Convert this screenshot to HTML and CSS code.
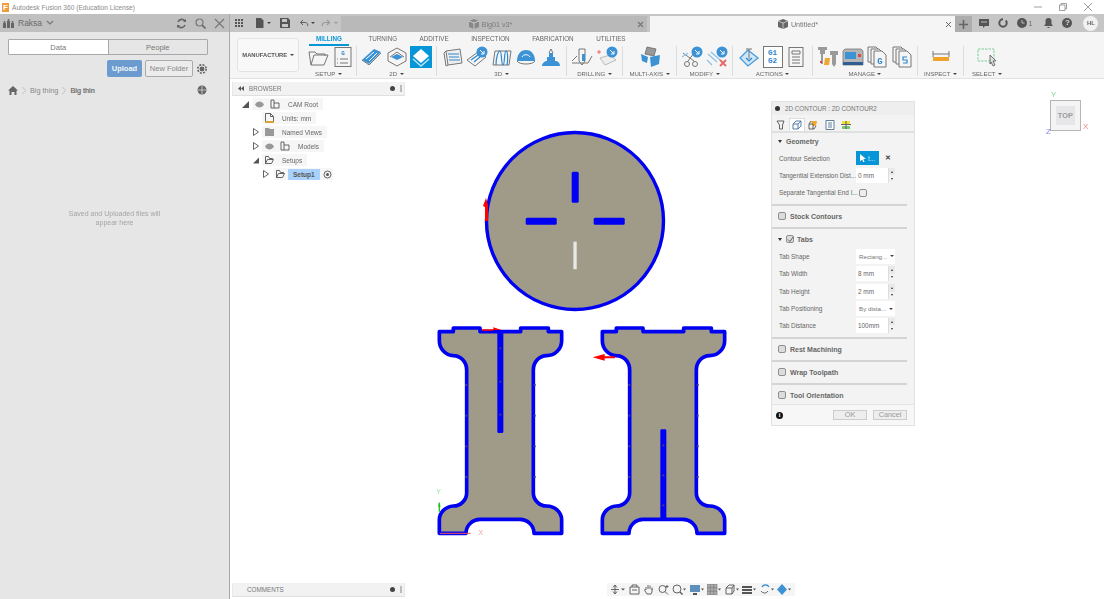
FILE: index.html
```html
<!DOCTYPE html>
<html lang="en">
<head>
<meta charset="utf-8">
<title>Autodesk Fusion 360</title>
<link rel="stylesheet" href="styles.css">
</head>
<body>
<div class="app">
  <header class="titlebar">
    <span class="logo">F</span>
    <span class="title">Autodesk Fusion 360 (Education License)</span>
    <span class="winctl">
      <svg width="10" height="10" viewBox="0 0 10 10"><path class="thin" d="M1 5h8"/></svg>
      <svg width="10" height="10" viewBox="0 0 10 10"><path class="thin" d="M1.500 3h5.500v5.500h-5.500zM3 3v-1.500h5.500v5.500h-1.500"/></svg>
      <svg width="10" height="10" viewBox="0 0 10 10"><path class="thin" d="M1 1l8 8M9 1l-8 8"/></svg>
    </span>
  </header>
  <div class="main">
    <aside class="left">
      <div class="lefthead">
        <svg width="11" height="9" viewBox="0 0 11 9"><path class="solid" d="M4 2h3v7h-3zM0 4h3v5h-3zM8 4h3v5h-3z"/><circle class="solid" cx="5.500" cy="1" r="1"/><circle class="solid" cx="1.500" cy="3" r="1"/><circle class="solid" cx="9.500" cy="3" r="1"/></svg>
        <span class="teamname">Raksa</span>
        <svg width="8" height="6" viewBox="0 0 8 6"><path class="line" d="M1 1l3 3 3-3"/></svg>
        <span class="spacer"></span>
        <svg width="11" height="11" viewBox="0 0 11 11"><path class="line2" d="M2 4a4 4 0 0 1 7-1M9 7a4 4 0 0 1-7 1"/><path class="solid" d="M10 1v3h-3zM1 10v-3h3z"/></svg>
        <svg class="gapl" width="11" height="11" viewBox="0 0 11 11"><circle class="line" cx="4.500" cy="4.500" r="3.500"/><path class="line2" d="M7 7l3.500 3.500"/></svg>
        <svg class="gapl" width="11" height="11" viewBox="0 0 11 11"><path class="line" d="M1 1l9 9M10 1l-9 9"/></svg>
      </div>
      <div class="segs"><span class="seg on">Data</span><span class="seg">People</span></div>
      <div class="actions">
        <span class="btn-up">Upload</span>
        <span class="btn-new">New Folder</span>
        <svg width="10" height="10" viewBox="0 0 10 10"><circle class="gear" cx="5" cy="5" r="3"/><circle class="dash" cx="5" cy="5" r="4.200"/></svg>
      </div>
      <div class="crumbs">
        <svg width="10" height="9" viewBox="0 0 10 9"><path class="solid" d="M5 0l5 4.500h-1.500v4.500h-2v-3h-3v3h-2v-4.500h-1.500z"/></svg>
        <svg width="6" height="9" viewBox="0 0 6 9"><path class="pale" d="M1 1l4 3.500-4 3.500"/></svg>
        <span>Big thing</span>
        <svg width="6" height="9" viewBox="0 0 6 9"><path class="pale" d="M1 1l4 3.500-4 3.500"/></svg>
        <span class="cur">Big thin</span>
        <span class="spacer"></span>
        <svg width="10" height="10" viewBox="0 0 10 10"><circle class="solid" cx="5" cy="5" r="4.500"/><path class="whiteline" d="M1 5h8M5 1v8"/></svg>
      </div>
      <p class="empty">Saved and Uploaded files will<br>appear here</p>
    </aside>
    <div class="work">
      <div class="tabbar">
        <svg width="10" height="10" viewBox="0 0 10 10"><path class="dark" d="M1 1h2v2h-2zM4 1h2v2h-2zM7 1h2v2h-2zM1 4h2v2h-2zM4 4h2v2h-2zM7 4h2v2h-2zM1 7h2v2h-2zM4 7h2v2h-2zM7 7h2v2h-2z"/></svg>
        <span class="qa qa-file">
          <svg width="9" height="10" viewBox="0 0 9 10"><path class="dark" d="M1 0h5l2.500 2.500v7.500h-7.500z"/></svg>
          <i class="caret"></i>
        </span>
        <svg class="qa-save" width="10" height="10" viewBox="0 0 10 10"><path class="dark" d="M0 0h8l2 2v8h-10zM2 1v3h5v-3zM2 6v3h6v-3z" fill-rule="evenodd"/></svg>
        <span class="qa qa-undo">
          <svg width="10" height="9" viewBox="0 0 10 9"><path class="darkline" d="M1.500 3.500h5a2.500 2.500 0 0 1 2 3.500M4 1l-2.500 2.500 2.500 2.500"/></svg>
          <i class="caret"></i>
        </span>
        <span class="qa qa-redo">
          <svg width="10" height="9" viewBox="0 0 10 9"><path class="paleline" d="M8.500 3.500h-5a2.500 2.500 0 0 0-2 3.500M6 1l2.500 2.500-2.500 2.500"/></svg>
          <i class="caret pale-c"></i>
        </span>
        <div class="doc inactive">
          <svg width="10" height="10" viewBox="0 0 10 10"><path class="tabcube" d="M5 0l5 2v6l-5 2-5-2v-6z"/><path class="whiteline" d="M5 4v6M0 2l5 2 5-2"/></svg>
          <span>Big01 v3*</span>
          <svg class="docx" width="7" height="7" viewBox="0 0 7 7"><path class="line" d="M1 1l5 5M6 1l-5 5"/></svg>
        </div>
        <div class="doc active">
          <svg width="10" height="10" viewBox="0 0 10 10"><path class="activecube" d="M5 0l5 2v6l-5 2-5-2v-6z"/><path class="whiteline" d="M5 4v6M0 2l5 2 5-2"/></svg>
          <span>Untitled*</span>
          <svg class="docx" width="7" height="7" viewBox="0 0 7 7"><path class="darkline" d="M1 1l5 5M6 1l-5 5"/></svg>
        </div>
        <div class="plus"><svg width="9" height="9" viewBox="0 0 9 9"><path class="line2" d="M4.500 0v9M0 4.500h9"/></svg></div>
        <div class="rightic">
          <svg width="10" height="9" viewBox="0 0 10 9"><path class="dark" d="M0 0h10v7h-4l-2 2v-2h-4z"/><path class="whiteline" d="M2 3h6"/></svg>
          <svg width="10" height="10" viewBox="0 0 10 10"><circle class="ring" cx="5" cy="5" r="3.700"/></svg>
          <span class="clock"><svg width="10" height="10" viewBox="0 0 10 10"><circle class="dark" cx="5" cy="5" r="5"/><path class="whiteline" d="M5 2v3h2.500"/></svg><b>1</b></span>
          <svg width="9" height="10" viewBox="0 0 9 10"><path class="dark" d="M4.500 0a3 3 0 0 1 3 3v3l1.500 2h-9l1.500-2v-3a3 3 0 0 1 3-3zM3.500 9h2v1h-2z"/></svg>
          <span class="help">?</span>
          <span class="avatar">HL</span>
        </div>
      </div>
      <div class="ribbon">
        <div class="mfg">MANUFACTURE<i class="caret"></i></div>
        <div class="ribcol">
          <nav class="modes">
            <span class="mode on">MILLING</span><span class="mode">TURNING</span><span class="mode">ADDITIVE</span><span class="mode">INSPECTION</span><span class="mode">FABRICATION</span><span class="mode">UTILITIES</span>
          </nav>
          <div class="tools">
            <section class="grp">
              <div class="ics">
                <svg class="ic" viewBox="0 0 22 22"><path class="o" d="M2 6h6l2 2h8v2M2 6l2 13h13l4-10h-14l-3 10"/></svg>
                <svg class="ic" viewBox="0 0 22 22"><rect class="o" x="3" y="1.500" width="16" height="19"/><text class="gl" x="11" y="9">G</text><path class="o" d="M8 13h8M8 17h8M5 13h1M5 17h1"/></svg>
              </div>
              <div class="lab lab-setup">SETUP<i class="caret"></i></div>
            </section>
            <section class="grp">
              <div class="ics">
                <svg class="ic" viewBox="0 0 22 22"><path class="b" d="M1 14l12-11 7 3-12 12z"/><path class="w" d="M5 13l8-7M8 15l8-8M3 16l6 4"/><path class="o" d="M1 14l7 5 12-12"/></svg>
                <svg class="ic" viewBox="0 0 22 22"><path class="o" d="M11 2l9 5v8l-9 5-9-5v-8z"/><path class="b" d="M11 8l6 3-6 3-6-3z"/><path class="o" d="M4 11l7-5 7 5"/></svg>
                <span class="ic sel"><svg viewBox="0 0 22 22"><path class="w-f" d="M11 3l8 7-8 7-8-7z"/><path class="wpale" d="M3 13l8 7 8-7"/></svg></span>
              </div>
              <div class="lab">2D<i class="caret"></i></div>
            </section>
            <section class="grp">
              <div class="ics">
                <svg class="ic" viewBox="0 0 22 22"><path class="o2" d="M4 5l14-2 2 14-14 2z"/><path class="o" d="M4 5l-2 2 2 13 2-1"/><path class="bl" d="M6 8h11M7 11h10M7 14h11"/></svg>
                <svg class="ic" viewBox="0 0 22 22"><path class="o" d="M1 14l11-8 8 5-11 9z"/><path class="bl" d="M5 14l7-5M8 16l6-5"/><circle class="b" cx="16" cy="6" r="5.500"/><path class="w" d="M14 4l4 4M18 5v3h-3"/></svg>
                <svg class="ic" viewBox="0 0 22 22"><path class="o" d="M4 5h16l-2 14h-16z"/><path class="bl" d="M5 19c0-7 2-14 4-14s1 14 3 14 1-14 3-14 2 9 1 14"/></svg>
                <svg class="ic" viewBox="0 0 22 22"><path class="b" d="M2 15c0-8 5-11 9-11s9 3 9 11z"/><path class="w" d="M7 11c1-3 7-3 8 0"/><path class="o" d="M2 15c2 4 16 4 18 0"/></svg>
                <svg class="ic" viewBox="0 0 22 22"><path class="b" d="M2 20c0-3 3-5 5-5v-4h2v-4h4v4h2v4c3 0 5 2 5 5z"/><path class="o" d="M9 7l2-4 2 4"/></svg>
              </div>
              <div class="lab">3D<i class="caret"></i></div>
            </section>
            <section class="grp">
              <div class="ics">
                <svg class="ic" viewBox="0 0 22 22"><path class="o" d="M8 3h6v12l-3 4-3-4zM1 15l5-5M21 10l-4 7h-16"/><path class="b" d="M11 8h3v7h-3z"/></svg>
                <svg class="ic" viewBox="0 0 22 22"><path class="opale" d="M4 12l10-3 6 5-11 5z"/><path class="r" d="M1 6h4M3 4v4"/><circle class="b" cx="16" cy="6" r="5.500"/><path class="w" d="M14 4l4 4M18 5v3h-3"/></svg>
              </div>
              <div class="lab">DRILLING<i class="caret"></i></div>
            </section>
            <section class="grp">
              <div class="ics">
                <svg class="ic" viewBox="0 0 22 22"><path class="o-f" d="M8 1l9 2-2 7-9-2z"/><path class="b" d="M2 8l7 3-1 6-5-2zM11 11l10-2-1 9-8 3z"/></svg>
              </div>
              <div class="lab">MULTI-AXIS<i class="caret"></i></div>
            </section>
            <section class="grp">
              <div class="ics">
                <svg class="ic" viewBox="0 0 22 22"><path class="o" d="M2 7l11 8M7 15l6-8"/><circle class="o" cx="6" cy="18" r="2.500"/><circle class="o" cx="14" cy="18" r="2.500"/><path class="blp" d="M1 11l6-4"/><circle class="b" cx="16" cy="6" r="5.500"/><path class="w" d="M14 4l4 4M18 5v3h-3"/></svg>
                <svg class="ic" viewBox="0 0 22 22"><path class="blp" d="M2 8l9 8M1 14l5 5M5 6l9 8"/><path class="rx" d="M14 14l6 6M20 14l-6 6"/><circle class="b" cx="16" cy="6" r="5.500"/><path class="w" d="M14 4l4 4M18 5v3h-3"/></svg>
              </div>
              <div class="lab">MODIFY<i class="caret"></i></div>
            </section>
            <section class="grp">
              <div class="ics">
                <svg class="ic" viewBox="0 0 22 22"><path class="blw" d="M10 4l-8 8 8 8 10-8z"/><path class="o2" d="M8 3h6M11 3v10"/><path class="bl" d="M8 12l3 3 3-3"/></svg>
                <span class="ic gbox"><b>G1</b><b>G2</b></span>
                <svg class="ic" viewBox="0 0 22 22"><rect class="o" x="4" y="1.500" width="14" height="19"/><path class="o" d="M7 5h8v3h-8zM7 11h8M7 14h8M7 17h8"/></svg>
              </div>
              <div class="lab">ACTIONS<i class="caret"></i></div>
            </section>
            <section class="grp">
              <div class="ics">
                <svg class="ic" viewBox="0 0 22 22"><path class="gr" d="M1 1h9v3h-2v4h-5v-4h-2zM13 5h8v4h-2v9l-2 3-2-3v-9h-2z"/><path class="o-thick" d="M5 8v10"/><path class="or" d="M8 12h5l-1 7h-5z"/><path class="rf" d="M3 15h2v2h-2z"/></svg>
                <svg class="ic" viewBox="0 0 22 22"><path class="gr2" d="M1 5l2-2h16l2 2v14h-20z"/><rect class="b" x="3" y="6" width="11" height="7"/><rect class="bd" x="1" y="16" width="20" height="3"/><path class="rf" d="M16 8h3v3h-3z"/></svg>
                <svg class="ic" viewBox="0 0 22 22"><path class="of" d="M2 1h8l3 3v12h-11z"/><path class="of" d="M5 3h8l3 3v12h-11z"/><path class="of" d="M8 5h8l4 4v12h-12z"/><text class="gl big" x="14" y="18">G</text></svg>
                <svg class="ic" viewBox="0 0 22 22"><path class="of" d="M2 1h8l3 3v12h-11z"/><path class="of" d="M5 3h8l3 3v12h-11z"/><path class="of" d="M8 5h8l4 4v12h-12z"/><path class="bl" d="M16 11h-4v3h4v3h-4"/></svg>
              </div>
              <div class="lab">MANAGE<i class="caret"></i></div>
            </section>
            <section class="grp">
              <div class="ics">
                <svg class="ic" viewBox="0 0 22 22"><path class="o" d="M3 5v6M19 5v6M3 8h16"/><rect class="orf" x="3" y="11" width="16" height="4"/></svg>
              </div>
              <div class="lab">INSPECT<i class="caret"></i></div>
            </section>
            <section class="grp nosep">
              <div class="ics">
                <svg class="ic" viewBox="0 0 22 22"><rect class="grn" x="2" y="3" width="16" height="12"/><path class="cur-i" d="M14 9l6 6h-3l2 4-2 1-2-4-1 2z"/></svg>
              </div>
              <div class="lab">SELECT<i class="caret"></i></div>
            </section>
          </div>
        </div>
      </div>
      <div class="canvas">
        <svg class="scene" viewBox="230 79 874 520">
          <defs>
            <path id="ishape" d="M28 35H70V24H150V35H272V24H355V35H395V62A45 45 0 0 1 350 107A40 43 0 0 0 310 150V518A40 40 0 0 0 350 558A45 42 0 0 1 395 600V640H312A42 42 0 0 0 270 598H150A42 42 0 0 0 108 640H28V600A45 42 0 0 1 70 558A40 40 0 0 0 110 518V150A40 43 0 0 0 70 107A45 45 0 0 1 28 62Z"/>
          </defs>
          <circle class="part" cx="575" cy="221" r="88.500"/>
          <rect class="cut" x="571.700" y="171.700" width="7" height="31" rx="1.500"/>
          <rect class="cut" x="525.700" y="217.700" width="31" height="7" rx="1.500"/>
          <rect class="cut" x="593.700" y="217.700" width="31" height="7" rx="1.500"/>
          <rect class="slit" x="573.400" y="241.700" width="3.300" height="27.500"/>
          <path class="arrow" d="M485 221V207L483 206L486 198L488 205V221Z"/>
          <g class="scale3">
            <use class="part2" href="#ishape"/>
            <rect class="cut" x="202" y="35" width="18" height="304" rx="4"/>
            <path class="arrow" d="M155 32V28H190V22L215 30H190V32Z"/>
            <g class="marks">
              <rect x="106" y="192" width="6" height="6"/><rect x="106" y="284" width="6" height="6"/><rect x="106" y="376" width="6" height="6"/><rect x="106" y="468" width="6" height="6"/>
              <rect x="311" y="192" width="6" height="6"/><rect x="311" y="284" width="6" height="6"/><rect x="311" y="376" width="6" height="6"/><rect x="311" y="468" width="6" height="6"/>
              <rect x="208" y="82" width="6" height="6"/><rect x="208" y="182" width="6" height="6"/><rect x="208" y="281" width="6" height="6"/>
            </g>
            <path class="axis-g" d="M28 575V548"/>
            <path class="axis-gf" d="M24 560L28 546L32 560Z"/>
            <path class="axis-r" d="M30 640H122"/>
            <text class="ax-y" x="26" y="522">Y</text>
            <text class="ax-x" x="152" y="646">X</text>
            <g transform="translate(489 0)">
              <use class="part2" href="#ishape"/>
              <rect class="cut" x="202" y="328" width="18" height="272" rx="4"/>
              <g class="marks">
                <rect x="106" y="192" width="6" height="6"/><rect x="106" y="284" width="6" height="6"/><rect x="106" y="376" width="6" height="6"/><rect x="106" y="468" width="6" height="6"/>
                <rect x="311" y="192" width="6" height="6"/><rect x="311" y="284" width="6" height="6"/><rect x="311" y="376" width="6" height="6"/><rect x="311" y="468" width="6" height="6"/>
                <rect x="208" y="373" width="6" height="6"/><rect x="208" y="463" width="6" height="6"/><rect x="208" y="553" width="6" height="6"/>
              </g>
              <path class="arrow" d="M66 109H35V102L-1 112L35 122V115H66Z"/>
            </g>
          </g>
        </svg>

        <div class="browser">
          <div class="phead"><svg width="6" height="5" viewBox="0 0 6 5"><path class="dark" d="M3 0v5l-3-2.500zM6 0v5l-3-2.500z"/></svg><span>BROWSER</span><span class="spacer"></span><span class="pdot"></span><span class="pbar"></span></div>
          <ul class="tree">
            <li class="row l0"><svg class="tri" width="9" height="9" viewBox="0 0 9 9"><path class="dark" d="M8 1v7h-7z"/></svg><span class="pill">
              <svg width="9" height="7" viewBox="0 0 9 7"><path class="eye" d="M0 3.500c2-4 7-4 9 0c-2 4-7 4-9 0z"/></svg>
              <svg width="10" height="10" viewBox="0 0 10 10"><path class="darkline" d="M1 1h3v3h5v5h-8zM4 4v5"/></svg><span class="tx">CAM Root</span></span></li>
            <li class="row l1b"><span class="pill">
              <svg width="9" height="10" viewBox="0 0 9 10"><path class="darkline" d="M.5.500h5l3 3v6h-8zM5.500.500v3h3"/><path class="unit" d="M0 8h9v2h-9z"/></svg><span class="tx">Units: mm</span></span></li>
            <li class="row l1"><svg class="tri" width="6" height="8" viewBox="0 0 6 8"><path class="darkline" d="M.5.500v7l5-3.500z"/></svg><span class="pill">
              <svg width="9" height="8" viewBox="0 0 9 8"><path class="folder" d="M0 0h4l1 1h4v7h-9z"/></svg><span class="tx">Named Views</span></span></li>
            <li class="row l1"><svg class="tri" width="6" height="8" viewBox="0 0 6 8"><path class="darkline" d="M.5.500v7l5-3.500z"/></svg><span class="pill">
              <svg width="9" height="7" viewBox="0 0 9 7"><path class="eye" d="M0 3.500c2-4 7-4 9 0c-2 4-7 4-9 0z"/></svg>
              <svg width="10" height="10" viewBox="0 0 10 10"><path class="darkline" d="M1 1h3v3h5v5h-8zM4 4v5"/></svg><span class="tx">Models</span></span></li>
            <li class="row l1"><svg class="tri" width="6" height="7" viewBox="0 0 7 7"><path class="dark" d="M7 0v7h-7z"/></svg><span class="pill">
              <svg width="9" height="8" viewBox="0 0 9 8"><path class="darkline" d="M.5 7.500v-7h3l1 2h3v1M.5 7.500l2-4h6l-2 4z"/></svg><span class="tx">Setups</span></span></li>
            <li class="row l2"><svg class="tri" width="6" height="8" viewBox="0 0 6 8"><path class="darkline" d="M.5.500v7l5-3.500z"/></svg><span class="pill tight">
              <svg width="9" height="8" viewBox="0 0 9 8"><path class="darkline" d="M.5 7.500v-7h3l1 2h3v1M.5 7.500l2-4h6l-2 4z"/></svg><span class="tx chosen">Setup1</span>
              <svg width="9" height="9" viewBox="0 0 9 9"><circle class="darkline" cx="4.500" cy="4.500" r="3.500"/><circle class="dark" cx="4.500" cy="4.500" r="1.500"/></svg></span></li>
          </ul>
        </div>

        <div class="comments"><span>COMMENTS</span><span class="spacer"></span><span class="pdot"></span><span class="pbar"></span></div>

        <div class="navbar">
          <svg class="nv wide" viewBox="0 0 14 11"><path class="darkline" d="M4 1v9M0 5.500h8M2 3.500l2-2.500 2 2.500M2 7.500l2 2.500 2-2.500"/><path class="dark" d="M10 4.500h4l-2 2z"/></svg>
          <svg class="nv" viewBox="0 0 11 11"><path class="darkline" d="M1 3h9v7h-9zM3 3v-2h5v2M3 6h5"/></svg>
          <svg class="nv" viewBox="0 0 11 11"><path class="darkline" d="M3 6v-3M5 5v-4M7 5v-3.500M9 6v-2.500M3 6c-1-1-2 0-1 1l2 3h4l1-2v-3"/></svg>
          <svg class="nv" viewBox="0 0 11 11"><circle class="darkline" cx="4.500" cy="5" r="3.500"/><path class="darkline" d="M7 7.500l3 3M9 1v3M7.500 2.500h3"/></svg>
          <svg class="nv wide" viewBox="0 0 14 11"><circle class="darkline" cx="5" cy="5" r="4"/><path class="line2" d="M8 8l2.500 2.500"/><path class="dark" d="M11 4.500h3l-1.500 2z"/></svg>
          <svg class="nv wide" viewBox="0 0 14 11"><path class="nvb" d="M0 1h10v7h-10z"/><path class="dark" d="M3 9h4v2h-4zM11 4.500h3l-1.500 2z"/></svg>
          <svg class="nv wide" viewBox="0 0 14 11"><path class="grid" d="M0 0h10v11h-10zM3.300 0v11M6.700 0v11M0 3.700h10M0 7.300h10"/><path class="dark" d="M11 4.500h3l-1.500 2z"/></svg>
          <svg class="nv wide" viewBox="0 0 14 11"><path class="darkline" d="M1 4h6v6h-6zM1 4l3-3h5v6l-2 3M7 4l2-3"/><path class="dark" d="M11 4.500h3l-1.500 2z"/></svg>
          <svg class="nv wide" viewBox="0 0 14 11"><path class="dark" d="M0 2h10v2h-10zM0 5h10v2h-10zM0 8h10v2h-10z"/><path class="dark" d="M11 4.500h3l-1.500 2z"/></svg>
          <svg class="nv wide" viewBox="0 0 14 11"><path class="bl" d="M9 3a4 4 0 0 0-7 0"/><path class="darkline" d="M1 7a4 4 0 0 0 7 0"/><path class="dark" d="M11 4.500h3l-1.500 2z"/></svg>
          <svg class="nv wide" viewBox="0 0 14 11"><path class="b" d="M5 0l5 5.500-5 5.500-5-5.500z"/><path class="dark" d="M11 4.500h3l-1.500 2z"/></svg>
        </div>

        <div class="cube">
          <span class="ax y">Y</span>
          <div class="cubeface"><span>TOP</span></div>
          <span class="ax x">X</span>
          <span class="ax z">Z</span>
        </div>

        <div class="palette">
          <div class="pal-head"><span class="pal-dot"></span>2D CONTOUR : 2D CONTOUR2</div>
          <div class="pal-tabs">
            <span class="ptab"><svg width="9" height="10" viewBox="0 0 9 10"><path class="darkline" d="M1 1h7l-1.500 4v4h-3v-4z"/></svg></span>
            <span class="ptab on"><svg width="10" height="10" viewBox="0 0 10 10"><path class="ptb" d="M1 4l3-3h5v5l-3 3h-5zM1 4h5v5M6 4l3-3"/></svg></span>
            <span class="ptab"><svg width="10" height="10" viewBox="0 0 10 10"><path class="pto" d="M3 1h6l-1 5h-3z"/><path class="darkline" d="M3 1l-2 3v5h5l2-3M1 4h4v5"/></svg></span>
            <span class="ptab"><svg width="10" height="10" viewBox="0 0 10 10"><path class="ptbl" d="M1 .500h8v9h-8zM3 3h4M3 5h4M3 7h4"/></svg></span>
            <span class="ptab"><svg width="10" height="10" viewBox="0 0 10 10"><path class="pty" d="M1 1h8v3h-8z"/><path class="ptg" d="M1 6h8v3h-8z"/><path class="darkline" d="M0 4.500h10M5 1v8"/></svg></span>
          </div>
          <div class="sec"><i class="down"></i>Geometry</div>
          <div class="pr"><label>Contour Selection</label><span class="pick"><svg width="6" height="8" viewBox="0 0 6 8"><path class="w-f" d="M0 0l6 5h-2.500l1 3-1 .500-1.500-3-2 2z"/></svg>t...</span><span class="clear">✕</span></div>
          <div class="pr"><label>Tangential Extension Dist...</label><span class="inp">0 mm<i class="spin"></i></span></div>
          <div class="pr"><label>Separate Tangential End I...</label><span class="cb mid"></span></div>
          <hr>
          <div class="sec ck"><span class="cb"></span>Stock Contours</div>
          <hr>
          <div class="sec"><i class="down"></i><span class="cb"><svg width="7" height="7" viewBox="0 0 7 7"><path class="darkline" d="M1 3.500l2 2 3-4.500"/></svg></span>Tabs</div>
          <div class="pr"><label>Tab Shape</label><span class="inp sel-in">Rectang...<i class="caret"></i></span></div>
          <div class="pr"><label>Tab Width</label><span class="inp">8 mm<i class="spin"></i></span></div>
          <div class="pr"><label>Tab Height</label><span class="inp">2 mm<i class="spin"></i></span></div>
          <div class="pr"><label>Tab Positioning</label><span class="inp sel-in">By dista...<i class="caret"></i></span></div>
          <div class="pr"><label>Tab Distance</label><span class="inp">100mm<i class="spin"></i></span></div>
          <hr>
          <div class="sec ck"><span class="cb"></span>Rest Machining</div>
          <hr>
          <div class="sec ck"><span class="cb"></span>Wrap Toolpath</div>
          <hr>
          <div class="sec ck"><span class="cb"></span>Tool Orientation</div>
          <div class="pal-foot"><span class="info">i</span><span class="spacer"></span><span class="fbtn">OK</span><span class="fbtn">Cancel</span></div>
        </div>
      </div>
    </div>
  </div>
</div>
</body>
</html>
```
FILE: styles.css
```css
* { box-sizing: border-box; }
html, body { margin: 0; height: 100%; overflow: hidden; background: #fff; }
body { font-family: "Liberation Sans", Arial, sans-serif; color: #666; font-size: 7px; }
svg { display: block; flex: none; }
.spacer { flex: 1; }
.app { width: 1104px; height: 599px; display: flex; flex-direction: column; filter: blur(.3px); }

.solid { fill: #666; }
.line { fill: none; stroke: #777; stroke-width: 1.200; }
.line2 { fill: none; stroke: #666; stroke-width: 1.600; }
.thin { fill: none; stroke: #888; stroke-width: .8; }
.pale { fill: none; stroke: #c4c4c4; stroke-width: 1; }
.dark { fill: #555; }
.darkline { fill: none; stroke: #555; stroke-width: .9; }
.paleline { fill: none; stroke: #999; stroke-width: 1.200; }
.whiteline { fill: none; stroke: #e8e8e8; stroke-width: .7; }
.caret { display: inline-block; width: 0; height: 0; border: 2px solid transparent; border-top: 2.500px solid #444; border-bottom: 0; margin-left: 2.500px; vertical-align: middle; }
.pale-c { border-top-color: #999; }

.titlebar { height: 14px; display: flex; align-items: center; background: #fff; padding-left: 2px; color: #8a8a8a; font-size: 6.650px; }
.logo { width: 7px; height: 9px; background: #ef9a3c; color: #fff; font: bold 8px/9px "Liberation Sans", sans-serif; text-align: center; margin-right: 3px; }
.winctl { margin-left: auto; display: flex; gap: 15px; padding-right: 11px; }

.main { flex: 1; display: flex; min-height: 0; }
.left { width: 230px; background: #e6e6e6; border-right: 1px solid #a8a8a8; display: flex; flex-direction: column; }
.lefthead { height: 18px; background: #c0c0c0; display: flex; align-items: center; padding: 0 4px 0 3px; }
.teamname { font-size: 8.500px; margin: 0 4px; color: #6a6a6a; }
.gapl { margin-left: 8px; }
.segs { display: flex; margin: 7px 21px 0 8px; height: 16px; border: 1px solid #a9a9a9; border-radius: 1px; }
.seg { flex: 1; display: flex; align-items: center; justify-content: center; font-size: 7.500px; color: #777; }
.seg.on { background: #fff; border-right: 1px solid #a9a9a9; }
.actions { display: flex; align-items: center; margin: 5px 0 0 107px; gap: 3px; height: 17px; }
.btn-up { width: 35px; height: 17px; background: #6c9bcf; border-radius: 2px; color: #f2f6fb; font-weight: bold; font-size: 7.500px; display: flex; align-items: center; justify-content: center; }
.btn-new { width: 48px; height: 17px; border: 1px solid #aaa; border-radius: 2px; font-size: 7.500px; color: #888; display: flex; align-items: center; justify-content: center; background: #ececec; margin-right: 1px; }
.gear { fill: #666; stroke: #e6e6e6; stroke-width: 1; }
.dash { fill: none; stroke: #666; stroke-width: 1.600; stroke-dasharray: 2 1.300; }
.crumbs { display: flex; align-items: center; gap: 3px; margin: 8px 22px 0 8px; height: 10px; font-size: 7.300px; color: #888; }
.crumbs .cur { color: #666; -webkit-text-stroke: .2px #666; }
.empty { margin: 115px 0 0; text-align: center; font-size: 7px; line-height: 8.500px; color: #a4a4a4; }

.work { flex: 1; display: flex; flex-direction: column; min-width: 0; }
.tabbar { height: 18px; background: #c6c6c6; display: flex; align-items: center; padding-left: 4px; }
.qa { display: flex; align-items: center; }
.qa-file { margin-left: 11px; }
.qa-save { margin-left: 9px; }
.qa-undo { margin-left: 9px; }
.qa-redo { margin-left: 6px; margin-right: 3px; }
.doc { height: 16px; margin-top: 2px; display: flex; align-items: center; justify-content: center; gap: 3px; position: relative; font-size: 7.200px; }
.doc.inactive { background: #b9b9b9; color: #7a7a7a; width: 306px; padding-right: 6px; }
.doc.active { background: #f5f5f5; margin-left: 3px; width: 305px; color: #777; padding-right: 8px; }
.tabcube { fill: #888; }
.activecube { fill: #666; }
.docx { position: absolute; right: 3px; top: 5px; }
.plus { width: 17px; height: 16px; margin-top: 2px; background: #adadad; display: flex; align-items: center; justify-content: center; }
.rightic { flex: 1; display: flex; align-items: center; gap: 9px; padding-left: 7px; }
.clock { display: flex; align-items: center; gap: 2px; margin-right: 3px; }
.clock b { font-weight: normal; font-size: 7px; }
.ring { fill: none; stroke: #555; stroke-width: 2; stroke-dasharray: 17 3; }
.help { width: 10px; height: 10px; border-radius: 50%; background: #555; color: #ddd; font: bold 8px/10px "Liberation Sans", sans-serif; text-align: center; }
.avatar { width: 15px; height: 15px; border-radius: 50%; background: #f1f1f1; color: #666; font: bold 6px/15px "Liberation Sans", sans-serif; text-align: center; margin-left: 2px; }

.ribbon { height: 47px; background: #f5f5f5; border-bottom: 1px solid #e2e2e2; display: flex; padding-left: 7px; }
.mfg { width: 62px; height: 34px; margin: 6px 6px 0 0; border: 1px solid #e3e3e3; border-radius: 3px; display: flex; align-items: center; justify-content: center; font-weight: bold; font-size: 5.800px; color: #555; background: #f8f8f8; }
.ribcol { flex: 1; display: flex; flex-direction: column; }
.modes { display: flex; height: 14px; margin-left: 4px; gap: 8.500px; flex: none; }
.mode { padding: 3px 7px 0; font-size: 6.300px; height: 14px; color: #666; white-space: nowrap; }
.mode.on { color: #0a96d8; font-weight: bold; border-bottom: 2px solid #0696d7; margin-right: 4px; }
.tools { display: grid; grid-template-columns: 52px 80px 130px 56px 54px 56px 80px 105px 46px 46px; height: 32px; }
.grp { display: flex; flex-direction: column; align-items: center; border-right: 1px solid #dcdcdc; height: 30px; }
.grp.nosep { border-right: 0; }
.ics { display: flex; gap: 2.500px; height: 23px; align-items: center; }
.ic { width: 22px; height: 22px; display: block; }
.lab { font-size: 6.100px; color: #666; white-space: nowrap; line-height: 8px; margin-top: 2px; }
.lab-setup { margin-right: 4px; }
.sel { background: #0696d7; }
.sel svg { width: 22px; height: 22px; }
.o { fill: none; stroke: #777; stroke-width: 1; }
.o2 { fill: #eee; stroke: #777; stroke-width: 1; }
.opale { fill: #eee; stroke: #bbb; stroke-width: 1; }
.o-f { fill: #999; stroke: #666; stroke-width: .8; }
.of { fill: #f5f5f5; stroke: #777; stroke-width: 1; }
.b { fill: #3b93d6; }
.bd { fill: #2e5f90; }
.bl { fill: none; stroke: #2d86cc; stroke-width: 1.200; }
.blp { fill: none; stroke: #8cc0e6; stroke-width: 1.200; }
.blw { fill: #cfe6f6; stroke: #4a9ad8; stroke-width: 1.300; }
.w { fill: none; stroke: #fff; stroke-width: 1; }
.w-f { fill: #fff; }
.wpale { fill: none; stroke: #bfe3f5; stroke-width: 1.400; }
.gl { fill: #2d86cc; font: bold 6px "Liberation Mono", monospace; text-anchor: middle; }
.gl.big { font-size: 9px; }
.r { fill: none; stroke: #e8696a; stroke-width: 1; }
.rx { fill: none; stroke: #e8696a; stroke-width: 2; }
.rf { fill: #d94a4a; }
.gr { fill: #9a9a9a; }
.gr2 { fill: #b5b5b5; stroke: #777; stroke-width: .8; }
.or { fill: #f0a62f; }
.orf { fill: #efa32b; }
.o-thick { stroke: #999; stroke-width: 2; }
.grn { fill: none; stroke: #7fce9b; stroke-width: 1; stroke-dasharray: 2.500 1; }
.cur-i { fill: #ddd; stroke: #555; stroke-width: .8; }
.gbox { display: flex; flex-direction: column; align-items: center; justify-content: center; border: 1px solid #777; background: #fff; line-height: 8px; width: 20px; }
.gbox b { font: bold 7.500px/8px "Liberation Mono", monospace; color: #2d86cc; }

.canvas { flex: 1; position: relative; background: #fff; min-height: 0; }
.scene { position: absolute; inset: 0; width: 874px; height: 520px; }
.part { fill: #a09a88; stroke: #0000f2; stroke-width: 3.400; }
.part2 { fill: #a09a88; stroke: #0000f2; stroke-width: 11; stroke-linejoin: round; }
.cut { fill: #0000f2; }
.slit { fill: #e8e8e6; }
.arrow { fill: #f00; }
.scale3 { transform: translate(430px, 320px) scale(.33333); }
.marks rect { fill: #3a3a90; }
.axis-g { stroke: #16c716; stroke-width: 4; fill: none; }
.axis-gf { fill: #16c716; }
.axis-r { stroke: #ef5555; stroke-width: 3; fill: none; }
.ax-y { fill: #8fe29f; font: 20px "Liberation Sans", sans-serif; text-anchor: middle; }
.ax-x { fill: #f3a0a0; font: 20px "Liberation Sans", sans-serif; text-anchor: middle; }

.browser { position: absolute; left: 2px; top: 3px; width: 173px; }
.phead, .comments { height: 14px; background: #f2f2f2; display: flex; align-items: center; padding: 0 2px 0 5px; font-size: 6.300px; color: #777; gap: 5px; border-bottom: 1px solid #e0e0e0; border-left: 1px solid #e8e8e8; border-right: 1px solid #e8e8e8; }
.pdot { width: 5px; height: 5px; border-radius: 50%; background: #444; }
.pbar { width: 2px; height: 7px; background: #bbb; }
.tree { list-style: none; margin: 1px 0 0; padding: 0; }
.row { height: 14px; display: flex; align-items: center; }
.pill { display: flex; align-items: center; background: #f6f6f6; height: 12px; padding: 0 5px 0 2px; gap: 6px; }
.tx { font-size: 6.500px; margin-left: 2px; color: #666; white-space: nowrap; }
.row.l0 { padding-left: 9px; }
.row.l0 .tri { margin-right: 3px; }
.row.l1 { padding-left: 21px; }
.row.l1 .tri { margin-right: 3px; }
.row.l1b { padding-left: 30px; }
.row.l1b .pill, .row.l1 .pill { padding-left: 3px; }
.row.l2 { padding-left: 31px; }
.row.l2 .tri { margin-right: 5px; }
.pill.tight { gap: 3px; padding: 0 1px 0 2px; }
.tight .tx { margin: 0; background: #a8d1fb; height: 11px; padding: 0 5px; line-height: 11px; font-weight: bold; color: #555; }
.eye { fill: #999; }
.unit { fill: #d8a534; }
.folder { fill: #999; }

.comments { position: absolute; left: 2px; bottom: 2px; width: 173px; padding-left: 14px; }
.navbar { position: absolute; left: 377px; bottom: 3px; width: 188px; height: 13px; background: #f5f5f5; display: flex; align-items: center; justify-content: space-between; padding: 0 4px; }
.nv { width: 11px; height: 11px; }
.nv.wide { width: 14px; }
.nvb { fill: #5c8fbb; }
.grid { fill: #aaa; stroke: #777; stroke-width: .6; }

.cube { position: absolute; left: 815px; top: 12px; width: 44px; height: 44px; }
.cubeface { position: absolute; left: 5px; top: 9px; width: 31px; height: 31px; border: 1px solid #b5b5b5; padding: 5px; background: #f4f4f4; }
.cubeface span { display: block; height: 19px; background: #e6e6e8; color: #999; font: bold 7.500px/19px "Liberation Sans", sans-serif; text-align: center; }
.ax { position: absolute; font-size: 8px; line-height: 8px; }
.ax.y { left: 6px; top: 0; color: #7fdc92; }
.ax.x { left: 38px; top: 32px; color: #f08c8c; }
.ax.z { left: 1px; top: 37px; color: #8484ee; }

.palette { position: absolute; left: 541px; top: 22px; width: 144px; height: 325px; background: #f3f3f3; border: 1px solid #e2e2e2; display: flex; flex-direction: column; }
.pal-head { height: 13px; flex: none; display: flex; align-items: center; padding-left: 3px; font-size: 6.300px; color: #777; gap: 5px; background: #eee; }
.pal-dot { width: 5px; height: 5px; background: #333; border-radius: 50%; }
.pal-tabs { height: 17.500px; display: flex; padding: 3px 0 0 0; border-bottom: 2px solid #e0e0e0; flex: none; }
.ptab { width: 16px; height: 13px; display: flex; align-items: center; justify-content: center; margin-right: .5px; }
.ptab.on { background: #fff; border: 1px solid #ddd; border-bottom: 0; }
.ptb { fill: #fff; stroke: #3f6f9f; stroke-width: .9; }
.pto { fill: #f0a62f; }
.ptbl { fill: #fff; stroke: #4f6f8f; stroke-width: .9; }
.pty { fill: #f0e040; }
.ptg { fill: #7cc97c; }
.sec { height: 17px; flex: none; display: flex; align-items: center; padding-left: 6px; font-weight: bold; font-size: 7px; color: #666; gap: 3px; }
.sec.ck { gap: 4px; }
.down { width: 0; height: 0; border: 2.500px solid transparent; border-top: 3.500px solid #333; border-bottom: 0; margin-right: 1px; }
.pr { height: 17.400px; flex: none; display: flex; align-items: center; padding-left: 7px; font-size: 6.400px; color: #666; }
.pr label { width: 77px; white-space: nowrap; flex: none; }
.pick { width: 23px; height: 14px; background: #0696d7; color: #d5eefa; display: flex; align-items: center; justify-content: center; gap: 2px; }
.clear { margin-left: 6px; color: #444; font-size: 7px; font-weight: bold; }
.inp { width: 39px; height: 15px; background: #fff; display: flex; align-items: center; padding-left: 2px; position: relative; white-space: nowrap; }
.spin { position: absolute; right: 0; top: 0; width: 7px; height: 15px; background: linear-gradient(#e9e9e9 0 50%, #f3f3f3 50%); border-left: 1px solid #ddd; }
.spin::before, .spin::after { content: ""; position: absolute; left: 1.500px; width: 0; height: 0; border: 1.500px solid transparent; }
.spin::before { top: 3px; border-bottom: 2px solid #333; border-top: 0; }
.spin::after { bottom: 3px; border-top: 2px solid #333; border-bottom: 0; }
.sel-in { justify-content: space-between; padding: 0 2px 0 3px; color: #777; font-size: 6.200px; }
.cb { width: 8px; height: 8px; border: 1px solid #8f8f8f; border-radius: 2px; background: #dcdcdc; display: flex; align-items: center; justify-content: center; flex: none; }
.cb.mid { background: #ededed; margin-left: 3px; }
.palette hr { height: 2px; border: 0; background: #d4d4d4; margin: 2px 0; width: 135px; flex: none; }
.pal-foot { margin-top: auto; height: 21px; flex: none; display: flex; align-items: center; padding: 0 7px 0 4px; border-top: 1px solid #e4e4e4; gap: 6px; background: #f7f7f7; }
.info { width: 7px; height: 7px; border-radius: 50%; background: #111; color: #fff; font: bold 6px/7px "Liberation Serif", serif; text-align: center; }
.fbtn { width: 34px; height: 10px; border: 1px solid #ccc; background: #eee; text-align: center; color: #999; font-size: 7.300px; line-height: 8px; }
```
